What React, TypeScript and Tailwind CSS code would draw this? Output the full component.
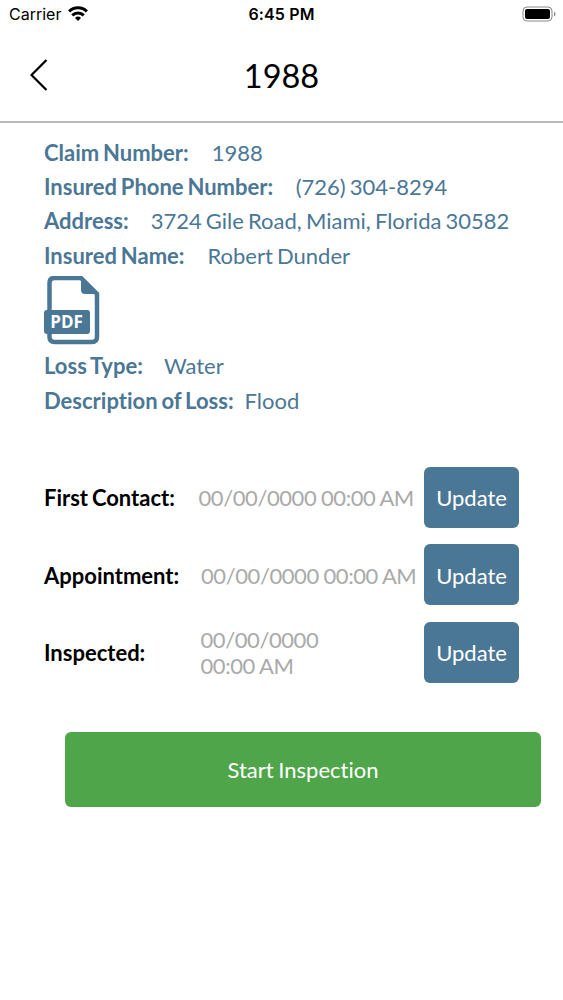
import { clsx } from "clsx";

type Detail = { label: string; value: string; gap: string };
type Milestone = { label: string; labelWidth: string; value: string };

const claim: Detail[] = [
  { label: "Claim Number:", value: "1988", gap: "gap-[23px]" },
  { label: "Insured Phone Number:", value: "(726) 304-8294", gap: "gap-[22.5px]" },
  { label: "Address:", value: "3724 Gile Road, Miami, Florida 30582", gap: "gap-[22px]" },
  { label: "Insured Name:", value: "Robert Dunder", gap: "gap-[23px]" },
];

const loss: Detail[] = [
  { label: "Loss Type:", value: "Water", gap: "gap-[21px]" },
  { label: "Description of Loss:", value: "Flood", gap: "gap-[11px]" },
];

const milestones: Milestone[] = [
  { label: "First Contact:", labelWidth: "w-[154.5px]", value: "00/00/0000 00:00 AM" },
  { label: "Appointment:", labelWidth: "w-[157px]", value: "00/00/0000 00:00 AM" },
  { label: "Inspected:", labelWidth: "w-[156.5px]", value: "00/00/0000\n00:00 AM" },
];

export default function App() {
  return (
    <div className="flex h-[1000px] w-[563px] flex-col overflow-hidden bg-white font-['Lato',sans-serif] text-[22px] text-black [font-variant-ligatures:none]">
      <StatusBar />
      <header className="grid h-[94px] shrink-0 grid-cols-[90px_1fr_90px] items-center border-b-2 border-[#b9b9b9]">
        <button type="button" aria-label="Back" className="pl-[29px]">
          <svg width="20" height="34" viewBox="0 0 20 34" fill="none">
            <path d="M17.5 2 2.5 17l15 15" stroke="black" strokeWidth="2.2" />
          </svg>
        </button>
        <h1 className="pt-[2px] text-center text-[32.5px] leading-none">1988</h1>
      </header>
      <main className="flex flex-col px-[44px] pt-[12px] [word-spacing:-1.5px]">
        <Details rows={claim} />
        <PdfIcon />
        <Details rows={loss} />
        <div className="mt-[49.3px] flex flex-col gap-[16px]">
          {milestones.map((m) => (
            <MilestoneRow key={m.label} {...m} />
          ))}
        </div>
      </main>
      <button
        type="button"
        className="mt-[48.7px] ml-[65px] h-[75px] w-[476px] rounded-[6px] bg-[#4fa64a] text-white [word-spacing:-1px]"
      >
        Start Inspection
      </button>
    </div>
  );
}

function StatusBar() {
  return (
    <div className="grid h-[29px] shrink-0 grid-cols-3 items-center pb-px font-['Inter',sans-serif] text-[16px]">
      <div className="flex items-center gap-[7px] pl-[9px]">
        <span>Carrier</span>
        <svg className="-mt-px" width="20" height="15" viewBox="0 0 20 15" fill="none" stroke="black" strokeWidth="3.1">
          <path d="M1.1 5.5a12.5 12.5 0 0 1 17.8 0M4.3 9.4a8.1 8.1 0 0 1 11.4 0" />
          <path d="m10 15-3-3a4.3 4.3 0 0 1 6 0z" fill="black" stroke="none" />
        </svg>
      </div>
      <span className="text-center font-semibold tracking-[0.15px]">6:45 PM</span>
      <svg className="mr-[7px] justify-self-end" width="34" height="16" viewBox="0 0 34 16">
        <rect x="1" y="1" width="29" height="14" rx="4" fill="none" stroke="#888" />
        <rect x="3" y="3" width="25" height="10" rx="2" />
        <path d="M32 5.5c2 1 2 4 0 5z" fill="#888" />
      </svg>
    </div>
  );
}

function Details({ rows }: { rows: Detail[] }) {
  return (
    <dl className="text-[#4b7796]">
      {rows.map(({ label, value, gap }) => (
        <div key={label} className={clsx("flex h-[34.4px] items-center whitespace-nowrap", gap)}>
          <dt className="font-bold">{label}</dt>
          <dd>{value}</dd>
        </div>
      ))}
    </dl>
  );
}

function PdfIcon() {
  return (
    <svg className="mt-[3px] mb-[4px]" width="56" height="69" viewBox="0 0 56 69">
      <path
        d="M5.5 34V7q0-5 5-5H37l16 16v43q0 5-5 5H10.5q-5 0-5-5v-4"
        fill="none"
        stroke="#4b7796"
        strokeWidth="4.5"
      />
      <path d="M37 2v12q0 4 4 4h12z" fill="#4b7796" />
      <rect y="34" width="46" height="24" rx="3" fill="#4b7796" />
      <text x="22.5" y="52" textAnchor="middle" fontFamily="Open Sans" fontSize="17" fontWeight="700" fill="white">
        PDF
      </text>
    </svg>
  );
}

function MilestoneRow({ label, labelWidth, value }: Milestone) {
  return (
    <div className="flex h-[61.5px] items-center">
      <span className={clsx("shrink-0 pt-px font-bold", labelWidth)}>{label}</span>
      <span className="min-w-0 flex-1 whitespace-pre pt-[1.5px] leading-[26px] tracking-[-0.42px] text-[#aaaaaa] [word-spacing:-0.5px]">
        {value}
      </span>
      <button type="button" className="h-[61px] w-[95px] shrink-0 rounded-[6px] bg-[#4b7796] pt-px text-white">
        Update
      </button>
    </div>
  );
}
